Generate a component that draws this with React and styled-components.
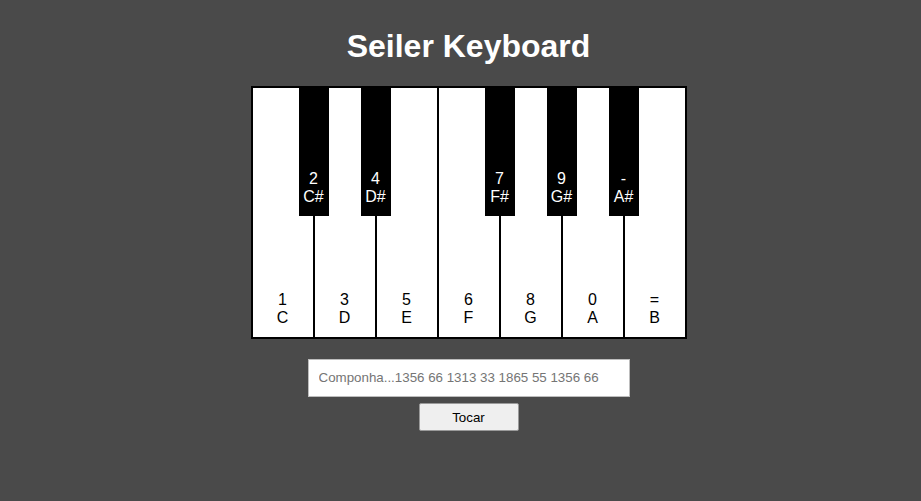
import React, { useState } from "react";
import styled, { createGlobalStyle } from "styled-components";

const keys = [
  { key: "1", note: "C", sharp: { key: "2", note: "C#" } },
  { key: "3", note: "D", sharp: { key: "4", note: "D#" } },
  { key: "5", note: "E" },
  { key: "6", note: "F", sharp: { key: "7", note: "F#" } },
  { key: "8", note: "G", sharp: { key: "9", note: "G#" } },
  { key: "0", note: "A", sharp: { key: "-", note: "A#" } },
  { key: "=", note: "B" },
];

export default function App() {
  const [song, setSong] = useState("");

  return (
    <>
      <GlobalStyle />
      <Page>
        <Title>Seiler Keyboard</Title>
        <Keyboard>
          {keys.map((k, i) => (
            <WhiteKey key={k.note} last={i === keys.length - 1}>
              {k.sharp && (
                <BlackKey>
                  <span>{k.sharp.key}</span>
                  <span>{k.sharp.note}</span>
                </BlackKey>
              )}
              <span>{k.key}</span>
              <span>{k.note}</span>
            </WhiteKey>
          ))}
        </Keyboard>
        <SongInput
          type="text"
          value={song}
          onChange={(e) => setSong(e.target.value)}
          placeholder="Componha...1356 66 1313 33 1865 55 1356 66"
        />
        <PlayButton>Tocar</PlayButton>
      </Page>
    </>
  );
}

const GlobalStyle = createGlobalStyle`
  body {
    margin: 0;
    background-color: #4a4a4a;
    font-family: "Liberation Sans", Arial, sans-serif;
  }
`;

const Page = styled.div`
  display: flex;
  flex-direction: column;
  align-items: center;
  padding: 28px 0 0 16px;
`;

const Title = styled.h1`
  margin: 0 0 21px;
  font-size: 32px;
  line-height: 37px;
  font-weight: bold;
  color: #ffffff;
`;

const Keyboard = styled.div`
  display: flex;
  border: 2px solid #000;
  background: #fff;
`;

const WhiteKey = styled.div`
  position: relative;
  flex: 0 0 auto;
  width: ${(props) => (props.last ? "60px" : "62px")};
  height: 249px;
  display: flex;
  flex-direction: column;
  justify-content: flex-end;
  align-items: center;
  padding-bottom: 10px;
  box-sizing: border-box;
  background: #fff;
  color: #000;
  font-size: 16px;
  line-height: 18px;
  border-right: ${(props) => (props.last ? "none" : "2px solid #000")};
  cursor: pointer;
`;

const BlackKey = styled.div`
  position: absolute;
  top: 0;
  right: -16px;
  z-index: 1;
  width: 30px;
  height: 128px;
  display: flex;
  flex-direction: column;
  justify-content: flex-end;
  align-items: center;
  padding-bottom: 10px;
  box-sizing: border-box;
  background: #000;
  color: #fff;
`;

const SongInput = styled.input`
  margin-top: 20px;
  width: 300px;
  padding: 10px;
  border: 1px solid #bdbdbd;
  font-family: "Liberation Sans", Arial, sans-serif;
  font-size: 13.33px;
  line-height: 16px;
  color: #333;
  outline: none;

  &::placeholder {
    color: #757575;
  }
`;

const PlayButton = styled.button`
  margin-top: 6px;
  width: 100px;
  height: 28px;
  background: #efefef;
  border: 1px solid #9a9a9a;
  border-radius: 2px;
  font-family: "Liberation Sans", Arial, sans-serif;
  font-size: 13.33px;
  color: #000;
  cursor: pointer;
`;
